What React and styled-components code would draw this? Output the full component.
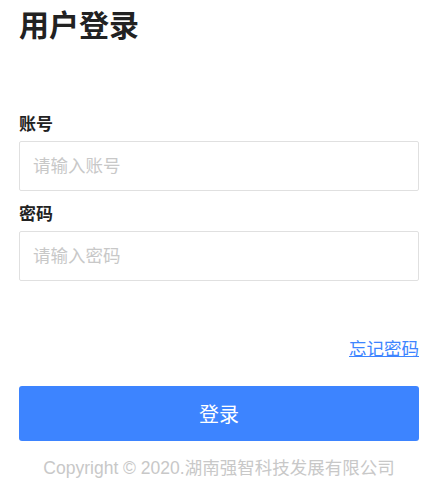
import React from 'react';
import styled, { createGlobalStyle } from 'styled-components';

const primary = '#3d84ff';

const GlobalStyle = createGlobalStyle`
    body {
        margin: 0;
        background: #fff;
        font-family: "Liberation Sans", "Noto Sans CJK SC", sans-serif;
    }
    * { box-sizing: border-box; }
`
const Page = styled.div`
    width: 400px;
    margin-left: 19px;
    padding-top: 8px;
    display: flex;
    flex-direction: column;
`
const Title = styled.h1`
    margin: 0;
    font-size: 30px;
    line-height: 36px;
    font-weight: 700;
    color: #222;
`
const Form = styled.form`
    margin-top: 69px;
    display: flex;
    flex-direction: column;
`
const Label = styled.label`
    font-size: 17px;
    line-height: 24px;
    font-weight: 700;
    color: #222;
    margin-top: ${p => p.$first ? '0' : '12px'};
    margin-bottom: 4px;
`
const Input = styled.input`
    width: 100%;
    height: 50px;
    border: 1px solid #e0e0e0;
    border-radius: 2px;
    padding: 0 13px;
    font-size: 17.5px;
    font-family: inherit;
    color: #333;
    outline: none;

    &::placeholder {
        color: #c8c8c8;
    }
`
const LinkRow = styled.div`
    display: flex;
    justify-content: flex-end;
    margin-top: 56px;
`
const Forgot = styled.a`
    font-size: 17.5px;
    line-height: 24px;
    color: ${primary};
    text-decoration: underline;
    cursor: pointer;
`
const Submit = styled.button`
    margin-top: 25px;
    height: 55px;
    width: 100%;
    border: none;
    border-radius: 3px;
    background: ${primary};
    color: #fff;
    font-size: 20px;
    font-family: inherit;
    cursor: pointer;
`
const Copyright = styled.p`
    margin: 15px 0 0;
    text-align: center;
    font-size: 17.5px;
    line-height: 24px;
    color: #c8c8c8;
`

function App() {
    return (
        <>
            <GlobalStyle />
            <Page>
                <Title>用户登录</Title>
                <Form onSubmit={e => e.preventDefault()}>
                    <Label $first>账号</Label>
                    <Input placeholder='请输入账号' />
                    <Label>密码</Label>
                    <Input type='password' placeholder='请输入密码' />
                    <LinkRow>
                        <Forgot>忘记密码</Forgot>
                    </LinkRow>
                    <Submit type='submit'>登录</Submit>
                </Form>
                <Copyright>Copyright © 2020.湖南强智科技发展有限公司</Copyright>
            </Page>
        </>
    )
}

export default App
